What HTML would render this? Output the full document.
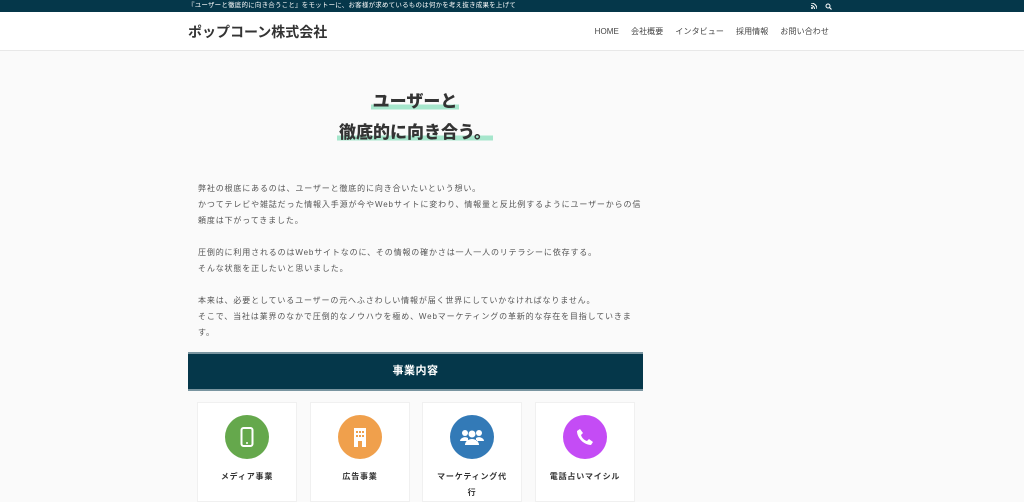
<!DOCTYPE html>
<html><head><meta charset="utf-8"><style>
*{margin:0;padding:0;box-sizing:border-box}
body{width:1024px;height:496px;overflow:hidden;background:#fafafa;font-family:"Liberation Sans","Noto Sans CJK JP",sans-serif;color:#333}
.top{height:12px;background:#05374a;color:#fff;font-size:6.5px;line-height:12px;position:relative}
.top span{position:absolute;left:188px;letter-spacing:0.2px}
.hdr{height:39px;background:#fff;border-bottom:1px solid #e8e8e8;position:relative}
.logo{position:absolute;left:188px;top:10px;font-size:14px;font-weight:bold;color:#333}
.nav{position:absolute;right:195px;top:14px;font-size:8px;color:#444;letter-spacing:0.1px}
.nav span{margin-left:12px}
h1{position:absolute;width:1024px;text-align:center;font-size:17px;font-weight:bold;color:#333;line-height:31px;top:86px;left:-97px}
h1 b{background:linear-gradient(transparent 66%,#a6e6cc 66%,#a6e6cc 92%,transparent 92%);padding:0 2px}
.txt{position:absolute;left:198px;top:181px;font-size:8px;line-height:16px;color:#555;width:445px;letter-spacing:0.85px}
.txt p{margin-bottom:16px}
.bar{position:absolute;left:188px;top:352px;width:455px;height:39px;background:#05374a;border-top:2px solid #7a95a0;border-bottom:2px solid #7a95a0;color:#fff;font-size:11px;font-weight:bold;text-align:center;line-height:35px;letter-spacing:0.5px}
.card{position:absolute;top:402px;width:100px;height:100px;background:#fff;border:1px solid #f0f0f0;text-align:center}
.c{width:44px;height:44px;border-radius:50%;margin:12px auto 0;display:flex;align-items:center;justify-content:center}
.card p{font-size:8px;font-weight:bold;margin-top:10px;line-height:16px;padding:0 8px;letter-spacing:0.8px}
</style></head><body>
<div class="top"><span>『ユーザーと徹底的に向き合うこと』をモットーに、お客様が求めているものは何かを考え抜き成果を上げて</span>
<svg style="position:absolute;left:811px;top:3px" width="6" height="6" viewBox="0 0 6 6"><circle cx="1" cy="5" r="1" fill="#fff"/><path d="M0 2.5a3.5 3.5 0 0 1 3.5 3.5M0 0a6 6 0 0 1 6 6" stroke="#fff" fill="none" stroke-width="1"/></svg>
<svg style="position:absolute;left:825px;top:3px" width="7" height="7" viewBox="0 0 7 7"><circle cx="3" cy="3" r="2" stroke="#fff" fill="none" stroke-width="1"/><path d="M4.5 4.5L6.5 6.5" stroke="#fff" stroke-width="1.2"/></svg></div>
<div class="hdr"><div class="logo">ポップコーン株式会社</div><div class="nav"><span>HOME</span><span>会社概要</span><span>インタビュー</span><span>採用情報</span><span>お問い合わせ</span></div></div>
<h1><b>ユーザーと</b><br><b>徹底的に向き合う。</b></h1>
<div class="txt"><p>弊社の根底にあるのは、ユーザーと徹底的に向き合いたいという想い。<br>かつてテレビや雑誌だった情報入手源が今やWebサイトに変わり、情報量と反比例するようにユーザーからの信<br>頼度は下がってきました。</p><p>圧倒的に利用されるのはWebサイトなのに、その情報の確かさは一人一人のリテラシーに依存する。<br>そんな状態を正したいと思いました。</p><p>本来は、必要としているユーザーの元へふさわしい情報が届く世界にしていかなければなりません。<br>そこで、当社は業界のなかで圧倒的なノウハウを極め、Webマーケティングの革新的な存在を目指していきま<br>す。</p></div>
<div class="bar">事業内容</div>
<div class="card" style="left:197px"><div class="c" style="background:#65a84c"><svg width="14" height="20"><rect x="1.5" y="1" width="11" height="18" rx="2" fill="none" stroke="#fff" stroke-width="2"/><circle cx="7" cy="16" r="1" fill="#fff"/></svg></div><p>メディア事業</p></div>
<div class="card" style="left:310px"><div class="c" style="background:#f0a04c"><svg width="14" height="20"><rect x="1" y="1" width="12" height="19" fill="#fff"/><g fill="#f0a04c"><rect x="3" y="4" width="2" height="2"/><rect x="6" y="4" width="2" height="2"/><rect x="9" y="4" width="2" height="2"/><rect x="3" y="8" width="2" height="2"/><rect x="6" y="8" width="2" height="2"/><rect x="9" y="8" width="2" height="2"/><rect x="5" y="14" width="4" height="6"/></g></svg></div><p>広告事業</p></div>
<div class="card" style="left:422px"><div class="c" style="background:#337ab7"><svg width="24" height="18" fill="#fff"><circle cx="5" cy="5" r="3"/><circle cx="19" cy="5" r="3"/><circle cx="12" cy="6" r="3.5"/><path d="M0 13a5 4 0 0 1 8-3v3zM24 13a5 4 0 0 0-8-3v3zM5 17a7 6 0 0 1 14 0z"/></svg></div><p>マーケティング代<br>行</p></div>
<div class="card" style="left:535px"><div class="c" style="background:#c44cf5"><svg width="18" height="18" viewBox="0 0 18 18"><path d="M4 1l3 4-2 2c1 3 3 5 6 6l2-2 4 3-2 3C8 17 1 10 1 3z" fill="#fff"/></svg></div><p style="white-space:nowrap;padding:0">電話占いマイシル</p></div>
</body></html>
